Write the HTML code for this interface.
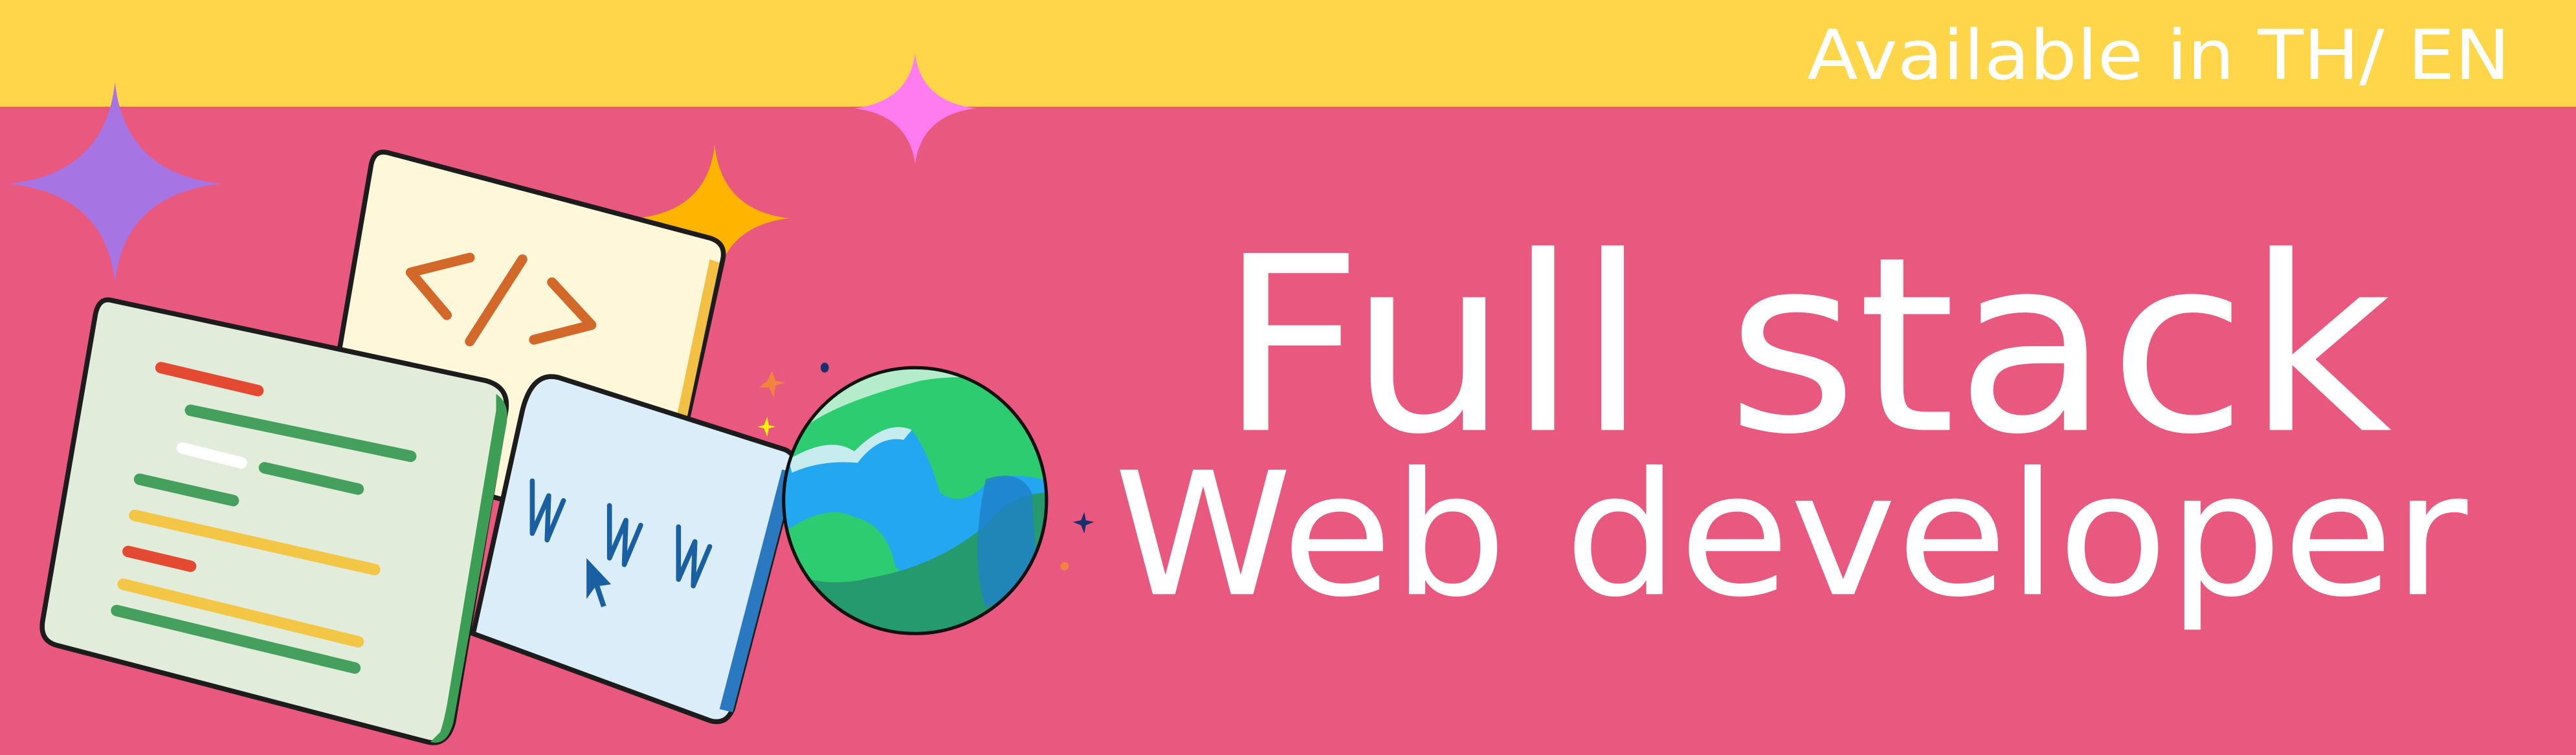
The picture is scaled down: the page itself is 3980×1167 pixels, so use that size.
<!DOCTYPE html>
<html><head><meta charset="utf-8"><style>
html,body{margin:0;padding:0;width:3980px;height:1167px;overflow:hidden;background:#E9587F}
svg{display:block}
text{font-family:"DejaVu Sans","Liberation Sans",sans-serif;fill:#fff}
</style></head><body>
<svg width="3980" height="1167" viewBox="0 0 1568 460" preserveAspectRatio="none">
<rect x="0" y="0" width="1568" height="460" fill="#E9587F"/>
<rect x="0" y="0" width="1568" height="65" fill="#FFD54A"/>
<text x="1100" y="48" font-size="42" textLength="428" lengthAdjust="spacingAndGlyphs">Available in TH/ EN</text>

<path d="M70 50 Q76 106 135 112 Q76 118 70 172 Q64 118 5 112 Q64 106 70 50Z" fill="#A675E3"/>
<path d="M557 33 Q561 62 594 66 Q561 70 557 100 Q553 70 520 66 Q553 62 557 33Z" fill="#FF7BF0"/>
<path d="M435 88 Q439 128 480 133 Q439 138 435 178 Q431 138 388 133 Q431 128 435 88Z" fill="#FFB500"/>

<path d="M236 93 L432 145 Q442 148 440 158 L402 330 L196 275 L226 100 Q228 91 236 93Z" fill="#FFF7DA" stroke="#1c1c1c" stroke-width="3"/>
<path d="M432 158 L398 320 L404 322 L438 160Z" fill="#F2C044"/>
<g stroke="#D2692A" stroke-width="6" stroke-linecap="round" fill="none" stroke-linejoin="round">
<path d="M286 157 L250 166 L272 192"/>
<path d="M318 158 L286 208"/>
<path d="M336 172 L360 198 L325 207"/>
</g>

<path d="M340 230 L478 274 Q486 278 484 286 L446 432 Q442 442 432 439 L288 386 L318 250 Q324 226 340 230Z" fill="#DAEDF9" stroke="#1c1c1c" stroke-width="3"/>
<path d="M476 286 L438 432 L446 434 L484 288Z" fill="#2A78C0"/>
<g stroke="#1A5FA0" stroke-width="3" fill="none" stroke-linejoin="round" stroke-linecap="round">
<path d="M324 293 L324 325 L334 302 L333 329 L343 305"/>
<path d="M371 308 L371 340 L381 317 L380 344 L390 320"/>
<path d="M413 321 L413 353 L423 330 L422 357 L432 333"/>
</g>
<path d="M357 340 L357 365 L362 358 L366 370 L369 369 L365 357 L372 356Z" fill="#1A5FA0"/>

<path d="M68 183 L296 232 Q310 236 308 250 L276 440 Q272 455 260 452 L34 393 Q24 390 26 378 L58 192 Q60 181 68 183Z" fill="#E1ECDA" stroke="#1c1c1c" stroke-width="3"/>
<path d="M302 240 Q311 246 308 260 L276 440 Q272 455 262 452 L268 446 Q270 440 272 430 L302 250Z" fill="#3C9E55"/>
<g stroke-width="7" stroke-linecap="round">
<path d="M98 224 L157 238" stroke="#E44A32"/>
<path d="M116 250 L250 278" stroke="#44A05C"/>
<path d="M111 273 L147 282" stroke="#ffffff"/>
<path d="M161 285 L218 298" stroke="#44A05C"/>
<path d="M85 292 L142 305" stroke="#44A05C"/>
<path d="M82 314 L228 347" stroke="#F4C646"/>
<path d="M78 336 L116 345" stroke="#E44A32"/>
<path d="M75 356 L218 391" stroke="#F4C646"/>
<path d="M71 372 L216 407" stroke="#44A05C"/>
</g>

<defs><clipPath id="g"><ellipse cx="557" cy="305" rx="80" ry="81"/></clipPath></defs>
<g clip-path="url(#g)">
<rect x="470" y="220" width="175" height="170" fill="#2ECC71"/>
<path d="M470 220 L645 220 L645 240 Q600 225 560 232 Q510 245 490 260 L470 270Z" fill="#B5EDCC"/>
<path d="M470 285 Q500 270 520 275 Q540 255 555 262 Q565 275 572 300 Q585 310 600 295 Q615 285 645 295 L645 390 L470 390Z" fill="#22A7F0"/>
<path d="M480 280 Q505 265 520 275 Q540 255 555 262 L550 268 Q535 265 522 282 Q500 280 482 288Z" fill="#C7ECF0"/>
<path d="M470 330 Q500 305 520 315 Q540 320 545 345 Q560 360 580 345 Q600 330 615 340 L645 345 L645 390 L470 390Z" fill="#2ECC71"/>
<path d="M470 345 Q500 360 530 352 Q570 345 600 320 Q615 300 640 300 L645 390 L470 390Z" fill="#259A6E"/>
<path d="M600 292 Q620 285 628 300 L632 360 L600 370 Q590 340 600 292Z" fill="#1F7FC9" opacity="0.8"/>
<path d="M608 240 Q630 255 640 290 L645 240Z" fill="#259A6E"/>
</g>
<ellipse cx="557" cy="305" rx="80" ry="81" fill="none" stroke="#111" stroke-width="2"/>

<path d="M470 226 L472 232 L478 233 L472 235 L471 242 L468 236 L462 236 L467 232Z" fill="#F0853C"/>
<path d="M467 254 L468 259 L472 260 L468 261 L467 266 L465 261 L461 260 L465 259Z" fill="#FFF200"/>
<ellipse cx="502" cy="224" rx="2.5" ry="3" fill="#1A2F6E"/>
<path d="M660 312 L661 317 L666 318 L661 320 L660 325 L658 320 L653 318 L658 317Z" fill="#1A2F6E"/>
<circle cx="648" cy="345" r="2.5" fill="#F0853C"/>

<text x="742" y="262" font-size="148" textLength="714" lengthAdjust="spacingAndGlyphs">Full stack</text>
<text x="678" y="362" font-size="104" textLength="824" lengthAdjust="spacingAndGlyphs">Web developer</text>
</svg>
</body></html>
